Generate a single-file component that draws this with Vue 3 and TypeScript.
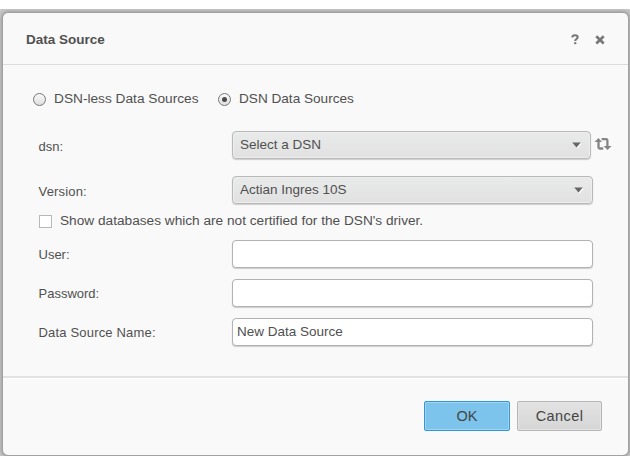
<script setup lang="ts">
import { ref } from 'vue'

const mode = ref<'dsnless' | 'dsn'>('dsn')
const showUncertified = ref(false)
const user = ref('')
const password = ref('')
const sourceName = ref('New Data Source')
</script>

<template>
  <div class="backdrop">
    <section class="dialog" role="dialog">
      <header class="head">
        <h1 class="title">Data Source</h1>
        <svg class="help" width="9" height="11" viewBox="0 0 9 11">
          <path d="M1.3 3.4C1.4 1.9 2.6 1.3 3.9 1.3C5.6 1.3 6.7 2 6.7 3.3C6.7 5.1 4.2 4.9 4.2 7" fill="none" stroke="#777" stroke-width="2.1" />
          <rect x="3.1" y="8.2" width="2.2" height="2" fill="#777" />
        </svg>
        <svg class="close" width="10" height="10" viewBox="0 0 10 10">
          <path d="M1.3 1.3L8.7 8.5M8.7 1.3L1.3 8.5" fill="none" stroke="#777" stroke-width="2.6" />
        </svg>
      </header>

      <main class="body">
        <div class="radios">
          <label class="option first" @click="mode = 'dsnless'">
            <span class="radio" :class="{ on: mode === 'dsnless' }"></span>
            <span class="less-text">DSN-less Data Sources</span>
          </label>
          <label class="option" @click="mode = 'dsn'">
            <span class="radio" :class="{ on: mode === 'dsn' }"></span>
            <span class="dsn-text">DSN Data Sources</span>
          </label>
        </div>

        <div class="row dsn">
          <span class="label tight">dsn:</span>
          <div class="select narrow">
            <span>Select a DSN</span>
            <svg class="caret" width="9" height="6" viewBox="0 0 9 6"><path d="M0.2 0.5H8.8L4.5 5.5Z" fill="#666" /></svg>
          </div>
          <svg class="refresh" width="18" height="14" viewBox="0 0 18 14">
            <path d="M4.5 3.5V10.2Q4.5 11.5 5.8 11.5H9.2M7.6 2.2H12Q13.4 2.2 13.4 3.6V9.5" fill="none" stroke="#858585" stroke-width="2.3" />
            <path d="M0.5 5L4.5 0.9L8 5ZM9.6 8.9H17.6L13.5 13Z" fill="#858585" />
          </svg>
        </div>

        <div class="row version">
          <span class="label">Version:</span>
          <div class="select">
            <span>Actian Ingres 10S</span>
            <svg class="caret" width="9" height="6" viewBox="0 0 9 6"><path d="M0.2 0.5H8.8L4.5 5.5Z" fill="#666" /></svg>
          </div>
        </div>

        <label class="check" @click="showUncertified = !showUncertified">
          <span class="box"><svg v-if="showUncertified" width="11" height="11" viewBox="0 0 11 11"><path d="M2 5.5L4.5 8L9 3" fill="none" stroke="#555" stroke-width="2" /></svg></span>
          <span class="check-text">Show databases which are not certified for the DSN's driver.</span>
        </label>

        <div class="row field">
          <span class="label tight">User:</span>
          <input v-model="user" class="input" type="text" />
        </div>
        <div class="row field">
          <span class="label tight">Password:</span>
          <input v-model="password" class="input" type="password" />
        </div>
        <div class="row field">
          <span class="label">Data Source Name:</span>
          <input v-model="sourceName" class="input" type="text" />
        </div>
      </main>

      <footer class="foot">
        <button class="btn ok" type="button">OK</button>
        <button class="btn cancel" type="button">Cancel</button>
      </footer>
    </section>
  </div>
</template>

<style>
body {
  background: #fff;
  overflow: hidden;
}
</style>

<style scoped>
* {
  box-sizing: border-box;
}
.backdrop {
  width: 630px;
  height: 447px;
  margin-top: 9px;
  padding: 4px 2px 1px 3px;
  background: #c8c8c8;
  overflow: hidden;
  font-family: "Liberation Sans", Arial, sans-serif;
  font-size: 13px;
  line-height: 16px;
  color: #505050;
}
.dialog {
  display: flex;
  flex-direction: column;
  height: 442px;
  background: #f9f9f9;
  border-radius: 5px;
  box-shadow: 0 0 0 1px #a2a2a2, 0 0 4px 1px #888;
}
.head {
  display: flex;
  align-items: center;
  height: 52px;
  padding: 3px 23px 0 23px;
  border-bottom: 1px solid #dcdcdc;
}
.title {
  flex: 1;
  margin: 0;
  font-size: 13.5px;
  font-weight: bold;
  line-height: 16px;
}
.help {
  margin-right: 15px;
  margin-top: -2px;
}
.close {
  margin-top: -1px;
}
.body {
  flex: 1;
  padding: 25px 0 0 29px;
}
.radios {
  display: flex;
  height: 18px;
}
.option {
  display: flex;
  align-items: center;
  gap: 8px;
  white-space: nowrap;
}
.first {
  width: 185px;
}
.less-text {
  font-size: 13.7px;
}
.dsn-text {
  font-size: 13.6px;
}
.radio {
  display: flex;
  align-items: center;
  justify-content: center;
  width: 13px;
  height: 13px;
  margin-left: 1px;
  border: 1px solid #777;
  border-radius: 50%;
  background: linear-gradient(#fafafa, #dedede);
}
.radio.on::after {
  content: "";
  width: 5px;
  height: 5px;
  border-radius: 50%;
  background: #4b4b4b;
}
.row {
  display: flex;
  align-items: center;
  height: 28px;
}
.label {
  width: 200px;
  padding: 4px 0 0 6.5px;
  white-space: nowrap;
  letter-spacing: 0.18px;
}
.label.tight {
  letter-spacing: 0;
}
.dsn {
  margin-top: 23px;
}
.version {
  margin-top: 17px;
}
.select {
  display: flex;
  align-items: center;
  justify-content: space-between;
  width: 361px;
  height: 28px;
  padding: 0 9px 0 7px;
  border: 1px solid #b9b9b9;
  border-radius: 4px;
  background: linear-gradient(#e9eaea, #e1e1e1);
  box-shadow: inset 0 0 0 1px #ededed, 0 1px 1px #ccc;
  font-size: 13.5px;
}
.narrow {
  width: 359px;
}
.caret {
  filter: drop-shadow(1px 1px 0 #fff);
}
.refresh {
  margin-left: 3px;
  margin-top: -3px;
}
.check {
  display: flex;
  align-items: center;
  gap: 8px;
  height: 16px;
  margin-top: 9px;
  padding-left: 7px;
  white-space: nowrap;
}
.check-text {
  font-size: 13.67px;
}
.box {
  display: flex;
  width: 13px;
  height: 13px;
  border: 1px solid #b8b8b8;
  background: #fff;
}
.field {
  margin-top: 11px;
}
.field .label {
  padding-top: 2px;
}
.input {
  width: 361px;
  height: 28px;
  padding: 0 4px 2px;
  border: 1px solid #b2b2b2;
  border-radius: 4px;
  outline: 0;
  background: #fff;
  box-shadow: 0 1px 1px #ccc;
  color: #505050;
  font: 13.5px "Liberation Sans", Arial, sans-serif;
}
.foot {
  display: flex;
  justify-content: flex-end;
  gap: 7px;
  height: 79px;
  padding: 23px 26px 0 0;
  border-top: 2px solid #e2e2e2;
  box-shadow: inset 0 1px 0 #fff;
}
.btn {
  width: 85px;
  height: 30px;
  padding: 0;
  border: 1px solid #b5b5b5;
  border-radius: 2px;
  background: linear-gradient(#e2e2e2, #d6d6d6);
  box-shadow: inset 0 0 0 1px #e5e5e5;
  color: #444;
  font: 14.5px "Liberation Sans", Arial, sans-serif;
}
.cancel {
  letter-spacing: 0.4px;
}
.ok {
  width: 86px;
  border-color: #3298d3;
  background: #7cc4eb;
  box-shadow: inset 0 0 0 1px #9fd5f2;
}
</style>
